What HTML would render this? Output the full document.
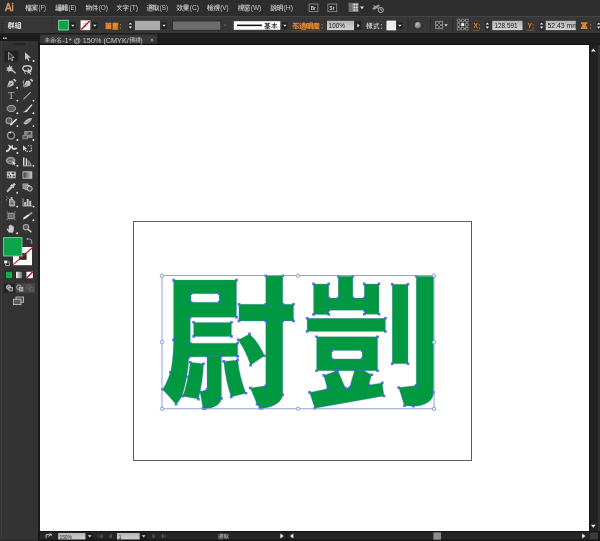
<!DOCTYPE html>
<html>
<head>
<meta charset="utf-8">
<title>Illustrator</title>
<style>
html,body{margin:0;padding:0;background:#333;overflow:hidden;}
body{width:600px;height:541px;position:relative;font-family:"Liberation Sans",sans-serif;}
svg{position:absolute;left:0;top:0;display:block;}
text{font-family:"Liberation Sans",sans-serif;}
</style>
</head>
<body>
<svg width="600" height="541" viewBox="0 0 600 541">
<defs>
<linearGradient id="gfield" x1="0" y1="0" x2="0" y2="1"><stop offset="0" stop-color="#b5b5b5"/><stop offset="1" stop-color="#d2d2d2"/></linearGradient>
<linearGradient id="ggrad" x1="0" y1="0" x2="1" y2="0"><stop offset="0" stop-color="#f4f4f4"/><stop offset="1" stop-color="#6a6a6a"/></linearGradient>
<linearGradient id="ggrad2" x1="0" y1="0" x2="1" y2="0"><stop offset="0" stop-color="#3a3a3a"/><stop offset="1" stop-color="#c8c8c8"/></linearGradient>
<filter id="soft" x="-5%" y="-5%" width="110%" height="110%"><feGaussianBlur stdDeviation="0.32"/></filter>
<filter id="soft2" x="-5%" y="-5%" width="110%" height="110%"><feGaussianBlur stdDeviation="0.4"/></filter>
<radialGradient id="gglobe" cx="0.35" cy="0.35" r="0.7"><stop offset="0" stop-color="#c8c8c8"/><stop offset="1" stop-color="#555"/></radialGradient>
</defs>

<g id="chrome">
<rect x="0" y="0" width="600" height="541" fill="#343333"/>
<rect x="0" y="0" width="600" height="16" fill="#2e2d2d"/>
<rect x="0" y="16" width="600" height="18" fill="#383737"/>
<rect x="0" y="16" width="600" height="1" fill="#454444"/>
<rect x="0" y="33" width="600" height="2" fill="#1f1e1e"/>
<rect x="0" y="35" width="600" height="10" fill="#201f1f"/>
<rect x="0" y="35" width="38" height="506" fill="#343333"/>
<rect x="1" y="41" width="1" height="500" fill="#3d3c3c"/>
<rect x="0" y="35" width="38" height="6" fill="#1d1c1c"/>
<rect x="38" y="35" width="2" height="506" fill="#1c1b1b"/>
<rect x="40" y="34.6" width="117.5" height="10" fill="#393838"/>
<rect x="157.5" y="34.6" width="1" height="10" fill="#161515"/>
<rect x="38" y="43.6" width="562" height="1.4" fill="#121111"/>
</g>

<g id="canvas">
<rect x="40" y="45" width="549" height="486" fill="#ffffff"/>
<rect x="133.5" y="221.5" width="338" height="239" fill="#ffffff" stroke="#5e5e5e" stroke-width="1"/>
</g>

<g id="menubar" filter="url(#soft)">
<text x="5" y="11.2" font-size="11.8" fill="#dca27c" stroke="#d0946c" stroke-width="0.65" textLength="8.7" lengthAdjust="spacingAndGlyphs">Ai</text>
<text x="38.5" y="10.3" font-size="6.6" fill="#c4c4c4" textLength="7.3" lengthAdjust="spacingAndGlyphs">(F)</text>
<text x="68.5" y="10.3" font-size="6.6" fill="#c4c4c4" textLength="7.8" lengthAdjust="spacingAndGlyphs">(E)</text>
<text x="98.7" y="10.3" font-size="6.6" fill="#c4c4c4" textLength="9.3" lengthAdjust="spacingAndGlyphs">(O)</text>
<text x="129.4" y="10.3" font-size="6.6" fill="#c4c4c4" textLength="8.6" lengthAdjust="spacingAndGlyphs">(T)</text>
<text x="159.7" y="10.3" font-size="6.6" fill="#c4c4c4" textLength="8.3" lengthAdjust="spacingAndGlyphs">(S)</text>
<text x="189.7" y="10.3" font-size="6.6" fill="#c4c4c4" textLength="9.3" lengthAdjust="spacingAndGlyphs">(C)</text>
<text x="220.2" y="10.3" font-size="6.6" fill="#c4c4c4" textLength="8.5" lengthAdjust="spacingAndGlyphs">(V)</text>
<text x="250.7" y="10.3" font-size="6.6" fill="#c4c4c4" textLength="10.6" lengthAdjust="spacingAndGlyphs">(W)</text>
<text x="283.5" y="10.3" font-size="6.6" fill="#c4c4c4" textLength="9.5" lengthAdjust="spacingAndGlyphs">(H)</text>
<path d="M25.50,6.17 L27.90,6.17M26.70,4.60 L26.70,10.90M26.70,6.49 L25.50,9.01M26.70,6.49 L27.90,8.38M29.70,4.60 L29.70,5.73M28.68,4.79 L28.98,5.54M30.72,4.79 L30.42,5.54M28.08,6.62 L28.08,5.86 L31.38,5.86 L31.38,6.62M28.80,6.68 L30.60,6.68 L30.60,7.75 L28.80,7.75 L28.80,6.68M28.26,8.38 L31.20,8.38 L31.20,10.90 L28.26,10.90 L28.26,8.38M28.26,9.64 L31.20,9.64M29.70,8.38 L29.70,10.90M34.80,4.60 L34.80,5.23M32.10,6.17 L32.10,5.23 L37.50,5.23 L37.50,6.17M34.50,5.86 L33.30,7.75 L36.30,8.25M36.00,6.17 L33.60,8.38M32.10,6.99 L37.50,6.99M31.98,9.01 L37.62,9.01M34.80,8.38 L34.80,10.90M34.80,9.01 L32.10,10.90M34.80,9.01 L37.50,10.90M57.00,4.60 L55.80,6.17 L57.18,6.05 L55.68,8.06 L57.60,7.75M56.70,8.06 L56.70,10.90M55.80,9.01 L55.62,10.59M57.42,9.01 L57.78,10.27M58.20,4.92 L61.38,4.92M58.38,5.73 L61.08,5.73 L61.08,6.80 L58.38,6.80 L58.38,5.73M58.38,6.80 L58.02,10.90M58.80,7.62 L61.38,7.62 L61.38,10.90 L58.80,10.90 L58.80,7.62M59.70,7.62 L59.70,10.90M60.54,7.62 L60.54,10.90M58.80,9.20 L61.38,9.20M61.80,5.23 L64.50,5.23M62.10,6.17 L64.20,6.17 L64.20,8.57 L62.10,8.57 L62.10,6.17M62.10,7.37 L64.20,7.37M61.80,9.51 L64.56,9.51M63.12,4.60 L63.12,10.90M65.40,4.79 L67.20,4.79 L67.20,5.99 L65.40,5.99 L65.40,4.79M64.80,6.68 L67.80,6.68M65.40,6.68 L65.40,10.27M67.20,6.68 L67.20,10.90M65.40,7.88 L67.20,7.88M65.40,9.01 L67.20,9.01M64.80,10.40 L67.80,10.02M86.60,5.23 L86.00,6.80M86.00,6.49 L88.10,6.49M87.02,4.60 L87.02,10.90M85.70,9.01 L88.10,8.06M89.00,4.60 L88.40,6.80M88.70,6.17 L91.40,6.17 L91.40,10.27 L90.50,10.90M89.60,6.49 L88.10,9.64M90.50,6.49 L89.00,10.59M93.80,4.60 L92.30,7.43M93.20,6.49 L93.20,10.90M95.00,5.23 L94.40,6.80M94.70,6.49 L97.70,6.49M94.10,8.70 L98.00,8.70M96.20,4.60 L96.20,10.90M119.40,4.60 L119.40,5.54M116.70,6.17 L122.10,6.17M120.90,6.17 L119.40,8.70 L116.70,10.90M117.90,6.17 L119.40,8.70 L122.10,10.90M125.70,4.60 L125.70,5.54M123.00,6.80 L123.00,5.86 L128.40,5.86 L128.40,6.80M124.20,7.12 L127.20,7.12 L125.70,8.38M123.00,8.70 L128.40,8.70M125.70,8.38 L125.70,10.90 L124.80,10.59M147.30,5.23 L147.90,6.17M146.88,7.43 L147.90,7.43 L147.90,9.64 L147.00,10.59M147.60,9.95 L148.80,10.90 L152.70,10.90M149.10,4.92 L150.48,4.92 L150.48,6.36 L149.10,6.36 L149.10,4.92M151.02,4.92 L152.40,4.92 L152.40,6.36 L151.02,6.36 L151.02,4.92M148.80,7.43 L152.70,7.43M149.82,6.80 L149.82,8.70M151.68,6.80 L151.68,8.70M148.62,8.70 L152.70,8.70M149.70,9.01 L148.98,9.95M151.68,9.01 L152.46,9.95M153.00,5.23 L156.60,5.23M153.60,5.23 L153.60,9.64M155.70,5.23 L155.70,10.90M153.60,6.68 L155.70,6.68M153.60,8.13 L155.70,8.13M153.00,9.95 L156.60,9.32M156.90,5.86 L158.70,5.86 L156.60,10.90M157.08,7.12 L159.00,10.90M178.20,4.60 L178.20,5.36M176.70,5.86 L179.70,5.86M177.60,6.49 L176.88,7.75M178.80,6.49 L179.58,7.75M179.10,7.75 L176.88,10.90M177.30,8.06 L179.58,10.90M180.90,4.60 L180.00,7.12M180.60,6.17 L182.70,6.17M182.10,6.17 L180.00,10.90M180.60,7.43 L182.70,10.90M183.90,4.92 L188.10,4.92 L188.10,7.75 L183.90,7.75 L183.90,4.92M183.90,6.30 L188.10,6.30M186.00,4.92 L186.00,10.90M183.30,8.70 L188.70,8.70M186.00,8.70 L183.30,10.90M186.00,8.70 L188.70,10.90M207.20,6.17 L209.60,6.17M208.40,4.60 L208.40,10.90M208.40,6.49 L207.20,9.01M208.40,6.49 L209.60,8.38M211.40,4.60 L209.72,6.49M211.40,4.60 L213.20,6.49M210.50,6.62 L212.30,6.62M210.08,7.31 L211.10,7.31 L211.10,8.38 L210.08,8.38 L210.08,7.31M211.70,7.31 L212.72,7.31 L212.72,8.38 L211.70,8.38 L211.70,7.31M210.68,8.70 L209.90,10.90M210.56,9.32 L211.28,10.59M212.30,8.70 L211.58,10.90M212.18,9.32 L213.20,10.90M214.70,4.60 L215.30,5.36M213.68,6.17 L215.90,6.17 L213.68,9.01M214.82,7.43 L214.82,10.90M215.18,7.75 L216.02,8.70M216.80,4.92 L219.20,4.92 L219.20,8.38 L216.80,8.38 L216.80,4.92M216.80,6.05 L219.20,6.05M216.80,7.25 L219.20,7.25M217.40,8.38 L216.38,10.90M218.48,8.38 L218.48,10.59 L219.50,10.59M238.90,4.60 L239.50,5.36M237.88,6.17 L240.10,6.17 L237.88,9.01M239.02,7.43 L239.02,10.90M239.38,7.75 L240.22,8.70M241.00,4.92 L243.40,4.92 L243.40,8.38 L241.00,8.38 L241.00,4.92M241.00,6.05 L243.40,6.05M241.00,7.25 L243.40,7.25M241.60,8.38 L240.58,10.90M242.68,8.38 L242.68,10.59 L243.70,10.59M247.00,4.60 L247.00,5.23M244.30,6.17 L244.30,5.23 L249.70,5.23 L249.70,6.17M246.10,5.54 L245.20,6.68M247.90,5.54 L248.80,6.68M244.90,7.12 L249.10,7.12 L249.10,10.90 L244.90,10.90 L244.90,7.12M247.00,6.49 L246.40,7.43M245.80,8.38 L247.90,8.38 L245.80,9.95M246.40,8.70 L247.90,10.14M271.40,4.60 L272.00,5.23M270.50,5.86 L272.90,5.86M270.92,6.80 L272.48,6.80M270.92,7.75 L272.48,7.75M270.92,8.70 L272.48,8.70 L272.48,10.59 L270.92,10.59 L270.92,8.70M273.80,4.60 L274.40,5.54M275.90,4.60 L275.30,5.54M273.68,6.05 L276.02,6.05 L276.02,8.06 L273.68,8.06 L273.68,6.05M274.40,8.06 L273.20,10.90M275.30,8.06 L275.30,10.59 L276.50,10.59 L276.50,9.64M277.10,5.54 L279.20,5.54 L279.20,9.64 L277.10,9.64 L277.10,5.54M277.10,7.56 L279.20,7.56M280.10,4.92 L282.50,4.92 L282.50,10.90 L281.90,10.59M280.10,4.92 L280.10,8.38 L279.50,10.90M280.10,6.80 L282.50,6.80M280.10,8.70 L282.50,8.70" fill="none" stroke="#cdcdcd" stroke-width="0.8" stroke-opacity="0.95"/>
<rect x="309.1" y="4" width="8.8" height="7.6" fill="#2a2929" stroke="#8b8b8b" stroke-width="0.9"/>
<text x="310.8" y="9.8" font-size="4.6" fill="#d8d8d8" font-weight="bold">Br</text>
<rect x="327.9" y="4" width="8.8" height="7.6" fill="#2a2929" stroke="#8b8b8b" stroke-width="0.9"/>
<text x="329.6" y="9.8" font-size="4.6" fill="#d8d8d8" font-weight="bold">St</text>
<rect x="348.8" y="2.9" width="9.7" height="8.9" fill="#8c8c8c"/><rect x="348.8" y="2.9" width="3.6" height="8.9" fill="#6e6e6e"/>
<path d="M353.6,4.6h1.6M356.2,4.6h1.4M353.6,7.4h1.6M356.2,7.4h1.4M353.6,10.2h1.6M356.2,10.2h1.4" stroke="#e4e4e4" stroke-width="1.2"/>
<path d="M360,6.6h4l-2,2.6z" fill="#e0e0e0"/>
<path d="M372,8.2l6.5,-3.6l1.5,1.5l-6,3.8z" fill="#9b9b9b"/><path d="M373.5,5.5l5,3" stroke="#9b9b9b" stroke-width="1.2"/><circle cx="380.8" cy="10" r="2.6" fill="#2e2d2d" stroke="#b0b0b0" stroke-width="1"/><path d="M380.8,8.4v1.8h1.2" stroke="#e0e0e0" stroke-width="0.7" fill="none"/>
</g>
<g id="controlbar" filter="url(#soft)">
<rect x="51.6" y="18" width="1" height="14" fill="#302f2f"/>
<path d="M1.6,19v13M3.3,19v13" stroke="#262525" stroke-width="0.8" stroke-dasharray="1,1"/>
<path d="M8.41,22.84 L10.89,22.84 L10.89,25.08M8.10,23.99 L11.20,23.99M8.41,25.08 L10.89,25.08M9.65,22.39 L8.29,27.32M8.91,26.04 L10.89,26.04 L10.89,28.28 L8.91,28.28 L8.91,26.04M11.82,22.20 L12.25,23.03M13.87,22.20 L13.43,23.03M11.51,23.61 L14.18,23.61M11.70,25.02 L13.99,25.02M11.32,26.42 L14.30,26.42M12.87,23.16 L12.87,28.60M16.55,22.20 L15.31,23.80 L16.74,23.67 L15.19,25.72 L17.17,25.40M16.24,25.72 L16.24,28.60M15.31,26.68 L15.12,28.28M16.98,26.68 L17.36,27.96M18.10,22.52 L20.58,22.52 L20.58,28.15 L18.10,28.15 L18.10,22.52M18.10,24.38 L20.58,24.38M18.10,26.23 L20.58,26.23M17.48,28.28 L21.20,28.28" fill="none" stroke="#e6e6e6" stroke-width="0.9"/>
<rect x="58.7" y="20.3" width="9.6" height="9.7" fill="#0ca247" stroke="#8fdcae" stroke-width="0.9"/>
<rect x="70.0" y="22.2" width="5.6" height="6.8" rx="0.8" fill="#242323"/><path d="M71.1,24.7h3.4l-1.7,2.1z" fill="#e9e9e9"/>
<rect x="80.8" y="20.4" width="9.3" height="9.6" fill="#ffffff" stroke="#bbb" stroke-width="0.5"/><path d="M81.3,29.5L89.6,21" stroke="#c01c28" stroke-width="1.5"/><rect x="83.8" y="23.6" width="3.2" height="3.2" fill="none" stroke="#d0202a" stroke-width="0.6" stroke-opacity="0.5"/>
<rect x="92.0" y="22.2" width="5.6" height="6.8" rx="0.8" fill="#242323"/><path d="M93.1,24.7h3.4l-1.7,2.1z" fill="#e9e9e9"/>
<rect x="105.3" y="23" width="6.2" height="6" fill="#d97a28" opacity="0.45"/><rect x="112.2" y="23" width="6.2" height="6" fill="#d97a28" opacity="0.45"/>
<path d="M106.54,22.60 L105.61,23.92M106.23,23.26 L107.97,23.26M107.16,23.26 L107.16,24.12M109.33,22.60 L108.52,23.92M109.02,23.26 L111.25,23.26M110.14,23.26 L110.14,24.12M106.23,24.91 L110.57,24.91 L110.57,26.76 L106.23,26.76M105.42,25.90 L111.38,25.90M106.04,27.68 L110.76,27.68M105.61,28.54 L111.19,28.54M108.40,24.25 L108.40,29.20M113.13,23.26 L117.47,23.26 L117.47,24.58 L113.13,24.58M112.32,23.92 L118.28,23.92M112.82,25.37 L117.78,25.37M115.30,22.60 L115.30,26.03M113.44,26.16 L117.16,26.16 L117.16,28.28 L113.44,28.28 L113.44,26.16M113.44,27.22 L117.16,27.22M115.30,26.16 L115.30,28.28M112.39,29.20 L118.21,29.20" fill="none" stroke="#f08c2e" stroke-width="0.95"/>
<rect x="120" y="24.2" width="1" height="1" fill="#ee8a2c"/><rect x="120" y="27.6" width="1" height="1" fill="#ee8a2c"/>
<rect x="127.9" y="21" width="5" height="9.4" fill="#2a2929"/><path d="M128.6,24.6l1.8,-2.2l1.8,2.2z M128.6,26.6l1.8,2.2l1.8,-2.2z" fill="#e2e2e2"/>
<rect x="135" y="20.8" width="25" height="9.3" fill="#a9a9a9"/>
<rect x="161.3" y="22.2" width="5.6" height="6.8" rx="0.8" fill="#242323"/><path d="M162.4,24.7h3.4l-1.7,2.1z" fill="#e9e9e9"/>
<rect x="172.5" y="21" width="48.3" height="9.2" fill="#6c6c6c" stroke="#2a2929" stroke-width="0.8"/>
<path d="M223.5,24.6h3l-1.5,1.9z" fill="#6a6a6a"/>
<rect x="233.8" y="21.2" width="46.5" height="8.6" fill="#fdfdfd"/><rect x="237" y="24.6" width="25" height="1.5" fill="#111"/>
<path d="M264.61,23.53 L270.19,23.53M266.16,22.60 L266.16,26.32M268.64,22.60 L268.64,26.32M266.16,24.46 L268.64,24.46M266.16,25.39 L268.64,25.39M264.30,26.32 L270.50,26.32M265.85,26.51 L264.80,27.56M268.95,26.51 L270.00,27.56M265.85,27.56 L268.95,27.56M267.40,26.63 L267.40,28.80M264.80,28.80 L270.00,28.80M271.51,24.46 L277.09,24.46M274.30,22.60 L274.30,28.80M274.30,24.46 L271.51,27.87M274.30,24.46 L277.09,27.87M273.06,27.25 L275.54,27.25" fill="none" stroke="#222" stroke-width="0.7"/>
<rect x="282.0" y="22.2" width="5.6" height="6.8" rx="0.8" fill="#242323"/><path d="M283.1,24.7h3.4l-1.7,2.1z" fill="#e9e9e9"/>
<rect x="292.7" y="23" width="27" height="6" fill="#d97a28" opacity="0.4"/>
<path d="M293.01,23.26 L298.69,23.26M296.16,23.26 L293.01,26.89M295.85,24.91 L295.85,29.20M296.48,25.57 L298.69,27.55M300.18,23.26 L300.81,24.25M299.74,25.57 L300.81,25.57 L300.81,27.88 L299.87,28.87M300.50,28.21 L301.75,29.20 L305.85,29.20M304.59,22.60 L302.38,23.26M301.94,24.12 L305.85,24.12M303.83,23.06 L303.83,25.77M303.83,24.25 L302.07,25.77M303.83,24.25 L305.72,25.77M302.70,26.23 L305.09,26.23 L304.28,27.09 L305.54,27.09 L305.54,28.21 L304.91,28.21M303.52,26.23 L302.07,28.21M306.71,23.59 L308.92,23.59 L308.92,27.88 L306.71,27.88 L306.71,23.59M306.71,25.70 L308.92,25.70M309.86,22.93 L312.38,22.93 L312.38,29.20 L311.75,28.87M309.86,22.93 L309.86,26.56 L309.23,29.20M309.86,24.91 L312.38,24.91M309.86,26.89 L312.38,26.89M316.40,22.60 L316.40,23.59M314.19,23.59 L319.24,23.59M314.19,23.59 L314.19,26.56 L313.44,29.20M314.82,24.91 L319.24,24.91M315.77,24.25 L315.77,26.23M317.98,24.25 L317.98,26.23M315.77,26.23 L317.98,26.23M315.14,27.22 L318.61,27.22 L314.82,29.20M315.77,27.55 L319.42,29.20" fill="none" stroke="#f08c2e" stroke-width="0.95"/>
<rect x="321.5" y="24.2" width="1" height="1" fill="#ee8a2c"/><rect x="321.5" y="27.6" width="1" height="1" fill="#ee8a2c"/>
<path d="M292.5,30.8h28" stroke="#b06a28" stroke-width="0.6" stroke-dasharray="1,1"/>
<rect x="327" y="20.8" width="27" height="9.3" fill="url(#gfield)"/>
<text x="328.6" y="28.1" font-size="6.7" fill="#1a1a1a" textLength="16.3" lengthAdjust="spacingAndGlyphs">100%</text>
<rect x="355.3" y="21" width="6" height="9" fill="#262525"/><path d="M357.3,23.6v3.8l2.4,-1.9z" fill="#e6e6e6"/>
<path d="M366.40,24.20 L368.80,24.20M367.60,22.60 L367.60,29.00M367.60,24.52 L366.40,27.08M367.60,24.52 L368.80,26.44M369.70,22.60 L370.00,23.24M371.80,22.60 L371.50,23.24M369.16,23.62 L372.28,23.62M369.52,24.52 L371.92,24.52M369.04,25.42 L372.40,25.42M370.72,23.24 L370.72,25.42M370.72,25.80 L370.72,29.00 L370.24,28.74M369.10,26.44 L370.18,26.44 L368.98,28.49M372.16,26.12 L371.32,26.95M371.08,26.95 L372.40,28.74M373.40,24.20 L378.80,24.20M377.00,22.60 L377.30,26.44 L378.80,29.00 L378.98,27.72M377.90,22.92 L378.50,23.56M373.70,26.12 L376.40,26.12M375.02,26.12 L375.02,28.36M373.40,28.68 L376.70,28.04" fill="none" stroke="#d6d6d6" stroke-width="0.75"/>
<rect x="381" y="24.2" width="1" height="1" fill="#d6d6d6"/><rect x="381" y="27.6" width="1" height="1" fill="#d6d6d6"/>
<rect x="386.9" y="21" width="8.8" height="9" fill="#ececec" stroke="#fafafa" stroke-width="0.7"/>
<rect x="397.0" y="22.2" width="5.6" height="6.8" rx="0.8" fill="#242323"/><path d="M398.1,24.7h3.4l-1.7,2.1z" fill="#e9e9e9"/>
<rect x="407.5" y="18" width="1" height="14" fill="#2b2a2a"/>
<circle cx="418" cy="25.3" r="3.9" fill="url(#gglobe)" stroke="#262525" stroke-width="0.8"/><path d="M415.3,25.3a2.7,4.2 0 0 1 5.4,0" fill="none" stroke="#3a3a3a" stroke-width="0.5" opacity="0.6"/>
<rect x="430" y="18" width="1" height="14" fill="#2b2a2a"/>
<rect x="435" y="20.8" width="8.2" height="8.4" fill="#7c7c7c"/><path d="M436.4,22.2h1.8v1.8h-1.8zM440,22.2h1.8v1.8h-1.8zM438.2,24h1.8v1.8h-1.8zM436.4,25.9h1.8v1.8h-1.8zM440,25.9h1.8v1.8h-1.8z" fill="#2c2c2c"/>
<path d="M444.3,24.3h3.4l-1.7,2.1z" fill="#e0e0e0"/>
<rect x="452.3" y="18" width="1" height="14" fill="#2b2a2a"/>
<path d="M458.6,20.5h8.2v8.2h-8.2z" fill="none" stroke="#9a9a9a" stroke-width="0.6"/><path d="M457.3,19.2h2.6v2.6h-2.6zM457.3,23.3h2.6v2.6h-2.6zM457.3,27.4h2.6v2.6h-2.6zM461.4,19.2h2.6v2.6h-2.6zM461.4,23.3h2.6v2.6h-2.6zM461.4,27.4h2.6v2.6h-2.6zM465.5,19.2h2.6v2.6h-2.6zM465.5,23.3h2.6v2.6h-2.6zM465.5,27.4h2.6v2.6h-2.6z" fill="#2c2b2b" stroke="#b4b4b4" stroke-width="0.6"/><rect x="461.4" y="23.3" width="2.6" height="2.6" fill="#fff"/>
<text x="473.4" y="28.3" font-size="6.6" font-weight="bold" fill="#dc842e">X</text><rect x="479" y="24.4" width="1" height="1" fill="#ee8a2c"/><rect x="479" y="27.6" width="1" height="1" fill="#ee8a2c"/><path d="M473,30.3h7" stroke="#b06a28" stroke-width="0.6"/>
<rect x="484.9" y="21" width="5" height="9.4" fill="#2a2929"/><path d="M485.6,24.6l1.8,-2.2l1.8,2.2z M485.6,26.6l1.8,2.2l1.8,-2.2z" fill="#e2e2e2"/>
<rect x="492.3" y="20.8" width="30.2" height="9.3" fill="url(#gfield)"/>
<text x="494.5" y="28.1" font-size="6.9" fill="#1a1a1a" textLength="23" lengthAdjust="spacingAndGlyphs">128.591</text>
<text x="527.4" y="28.3" font-size="6.6" font-weight="bold" fill="#dc842e">Y</text><rect x="532.6" y="24.4" width="1" height="1" fill="#ee8a2c"/><rect x="532.6" y="27.6" width="1" height="1" fill="#ee8a2c"/><path d="M527,30.3h7" stroke="#b06a28" stroke-width="0.6"/>
<rect x="539.1" y="21" width="5" height="9.4" fill="#2a2929"/><path d="M539.8,24.6l1.8,-2.2l1.8,2.2z M539.8,26.6l1.8,2.2l1.8,-2.2z" fill="#e2e2e2"/>
<rect x="545.8" y="20.8" width="30" height="9.3" fill="url(#gfield)"/>
<clipPath id="cy"><rect x="545.8" y="20.8" width="30" height="9.3"/></clipPath>
<text clip-path="url(#cy)" x="547.5" y="28.1" font-size="6.9" fill="#1a1a1a" textLength="30.5" lengthAdjust="spacingAndGlyphs">52.43 mm</text>
<path d="M581,22.3h6.4v1.6h-1.5l0.8,3.2h0.7v1.8h-6.4v-1.8h0.7l0.8,-3.2h-1.5z" fill="#dc842e"/><rect x="590" y="24.4" width="1" height="1" fill="#ee8a2c"/><rect x="590" y="27.6" width="1" height="1" fill="#ee8a2c"/>
<rect x="596.2" y="21" width="5" height="9.4" fill="#2a2929"/><path d="M596.9,24.6l1.8,-2.2l1.8,2.2z M596.9,26.6l1.8,2.2l1.8,-2.2z" fill="#e2e2e2"/>
</g>
<g id="tabbar" filter="url(#soft)">
<path d="M45.40,38.67 L49.11,38.67M44.87,40.05 L49.64,40.05M47.25,37.30 L47.25,42.80M47.25,40.05 L44.87,42.52M47.25,40.05 L49.64,42.52M53.00,37.30 L50.62,39.50M53.00,37.30 L55.39,39.50M51.94,39.50 L54.06,39.50M50.88,40.32 L52.73,40.32 L52.73,42.25 L50.88,42.25 L50.88,40.32M53.53,40.32 L55.39,40.32 L55.39,42.25 L54.86,42.25M53.53,40.32 L53.53,42.80M58.48,37.30 L56.63,39.50M58.22,38.12 L60.61,38.12 L57.16,41.70M57.95,39.22 L59.02,40.05M57.95,40.60 L60.87,40.60 L60.87,42.80 L57.95,42.80 L57.95,40.60" fill="none" stroke="#c2c2c2" stroke-width="0.65" stroke-opacity="0.9"/>
<text x="62.2" y="42.9" font-size="6.3" fill="#c2c2c2" textLength="66.6" lengthAdjust="spacingAndGlyphs">-1* @ 150% (CMYK/</text>
<path d="M129.56,37.57 L131.42,37.57 L130.52,38.51M129.83,38.67 L131.10,39.22M129.30,39.61 L131.69,39.61 L131.21,40.32M130.52,39.61 L130.52,42.80 L129.94,42.52M131.95,37.57 L134.60,37.57M133.28,37.57 L133.01,38.29M132.27,38.40 L134.34,38.40 L134.34,41.31 L132.27,41.31 L132.27,38.40M132.27,39.39 L134.34,39.39M132.27,40.32 L134.34,40.32M132.80,41.48 L131.95,42.80M133.75,41.48 L134.60,42.80M136.11,37.30 L136.64,37.96M135.21,38.67 L137.17,38.67 L135.21,41.15M136.22,39.77 L136.22,42.80M136.53,40.05 L137.28,40.88M137.97,37.57 L140.09,37.57 L140.09,40.60 L137.97,40.60 L137.97,37.57M137.97,38.56 L140.09,38.56M137.97,39.61 L140.09,39.61M138.50,40.60 L137.59,42.80M139.45,40.60 L139.45,42.52 L140.35,42.52" fill="none" stroke="#c2c2c2" stroke-width="0.65" stroke-opacity="0.9"/>
<text x="140.6" y="42.9" font-size="6.3" fill="#c2c2c2">)</text>
<path d="M150.7,38.8l2.4,2.4M153.1,38.8l-2.4,2.4" stroke="#c8c8c8" stroke-width="0.7"/>
<rect x="3.2" y="37.4" width="1.3" height="1.6" fill="#d8d8d8"/><rect x="5.3" y="37.4" width="1.3" height="1.6" fill="#d8d8d8"/>
<rect x="13.5" y="43.5" width="11.5" height="1.2" fill="#1d1c1c"/>
</g>
<g id="toolbar" filter="url(#soft)">
<rect x="4.3" y="50.6" width="13.8" height="11.1" fill="#232222"/>
<path d="M8.6,52.3l0,7.6l1.9,-1.7l1.3,2.6l1.2,-0.6l-1.3,-2.5l2.5,-0.2z" fill="#353434" stroke="#a8a8a8" stroke-width="0.9" stroke-linejoin="round"/>
<path d="M25,52.2l0,7.8l1.9,-1.8l1.4,2.8l1.3,-0.6l-1.4,-2.7l2.6,-0.2z" fill="#c6c6c6"/>
<circle cx="33.6" cy="60.9" r="0.95" fill="#ededed"/>
<path d="M9.4,64.8l0.9,2l2.1,-0.8l-0.9,2l2,1l-2.1,0.7l0.6,2.1l-2,-1l-1.3,1.8l-0.5,-2.2l-2.2,0.1l1.6,-1.5l-1.3,-1.8l2.2,0.2z" fill="#c6c6c6"/><path d="M10.8,69.2l4.9,4" stroke="#c6c6c6" stroke-width="1.4"/>
<ellipse cx="27.2" cy="68.4" rx="4.3" ry="2.7" fill="none" stroke="#c6c6c6" stroke-width="1.45"/><path d="M25.2,70.5q-1.5,2 0.3,3.4" fill="none" stroke="#c6c6c6" stroke-width="0.9"/><path d="M27.6,68l0,6l1.5,-1.3l1,2l1,-0.5l-1,-1.9l1.9,-0.2z" fill="#c6c6c6"/>
<path d="M12.1,80.6L13.9,82.4L13.5,85.3Q11,86.7 7.1,87.5Q7.9,83.5 9.3,81Z" fill="#c6c6c6"/><path d="M13,79.7l1.3,-1.2l2.2,2.2l-1.2,1.3z" fill="#c6c6c6"/><path d="M7.4,87.2l3.4,-3.4" stroke="#343333" stroke-width="0.7"/><circle cx="11.2" cy="83.4" r="0.7" fill="#343333"/>
<circle cx="17.2" cy="87.8" r="0.95" fill="#ededed"/>
<path d="M28.9,80.6L30.7,82.4L30.3,85.3Q27.8,86.7 23.9,87.5Q24.7,83.5 26.1,81Z" fill="#c6c6c6"/><path d="M29.8,79.7l1.3,-1.2l2.2,2.2l-1.2,1.3z" fill="#c6c6c6"/><path d="M24.2,87.2l3.4,-3.4" stroke="#343333" stroke-width="0.7"/><path d="M24.6,80q-2.6,1.4 -1,3.2q1.3,1.5 -0.6,3.4" fill="none" stroke="#c6c6c6" stroke-width="0.9"/>
<text x="7.9" y="99" font-size="10.6" fill="#b4b4b4" style="font-family:'Liberation Serif',serif">T</text>
<circle cx="17.4" cy="100.6" r="0.95" fill="#ededed"/>
<path d="M23.4,99.3L30.7,92.2" stroke="#a8a8a8" stroke-width="1.1"/>
<circle cx="33.5" cy="100.6" r="0.95" fill="#ededed"/>
<ellipse cx="11.3" cy="108.5" rx="4.2" ry="3" fill="#5e5e5e" stroke="#b4b4b4" stroke-width="1"/>
<circle cx="17.4" cy="113.3" r="0.95" fill="#ededed"/>
<path d="M31.4,104.2l1.1,0.9l-4.6,5.4l-1.2,-1z" fill="#d2d2d2"/><path d="M26.5,109.4l1.5,1.3q-1.2,2 -5.4,1.5q2.6,-0.7 3.9,-2.8z" fill="#e4e4e4"/>
<circle cx="33.4" cy="113.3" r="0.95" fill="#ededed"/>
<circle cx="9" cy="120.8" r="3" fill="#5c5c5c" stroke="#9d9d9d" stroke-width="1.1"/><path d="M10.3,125.3L16.7,119" stroke="#ececec" stroke-width="1.6"/>
<circle cx="17.4" cy="126.1" r="0.95" fill="#ededed"/>
<path d="M23.3,123.6q0.2,-1.4 2.6,-3.4q3,-2.4 5.4,-2.1q1,0.4 0.4,1.6q-1,2 -3.6,3.8q-3.2,1.8 -4.8,0.1z" fill="#a2a2a2"/><path d="M26.4,120.6q2.4,-1.8 4.4,-1.6" stroke="#d8d8d8" stroke-width="0.8" fill="none"/><path d="M24.2,123.4q1.4,0.6 3,-0.4" stroke="#d0d0d0" stroke-width="0.9" fill="none"/>
<circle cx="33.4" cy="126.1" r="0.95" fill="#ededed"/>
<circle cx="11" cy="135.4" r="3.5" fill="none" stroke="#8e8e8e" stroke-width="1.5"/><circle cx="11.2" cy="135.4" r="1.3" fill="#222121"/><path d="M8.2,132.6l2.4,-1.2l0.2,2.4z" fill="#e2e2e2"/>
<circle cx="17.4" cy="140.0" r="0.95" fill="#ededed"/>
<rect x="24.8" y="131.5" width="7.2" height="5.8" fill="#7e7e7e" stroke="#b0b0b0" stroke-width="0.7"/><path d="M26.4,135.6l3.6,-2.6m-1.8,-0.2l2,0l0,1.8" stroke="#2a2a2a" stroke-width="0.8" fill="none"/><rect x="22.9" y="135.2" width="4.6" height="3.6" fill="#5a5a5a" stroke="#a4a4a4" stroke-width="0.7"/>
<circle cx="33.4" cy="140.0" r="0.95" fill="#ededed"/>
<path d="M6.7,151.2q2.2,-0.4 3.2,-3q1,-3.2 2.2,-0.6q1,2.2 4,0.8" fill="none" stroke="#d6d6d6" stroke-width="1.9" stroke-linecap="round"/><path d="M8.6,144.8l1.6,2M12.8,145.2l-0.8,1.6" stroke="#d6d6d6" stroke-width="1.1"/>
<circle cx="17.4" cy="153.0" r="0.95" fill="#ededed"/>
<path d="M23,145.2l0,5.6l1.4,-1.2l0.9,1.9l0.9,-0.4l-0.9,-1.9l1.9,-0.2z" fill="#d4d4d4"/><path d="M27.8,145.8h1.4M30.2,145.8h1.6M31.4,147.6v1.2M31.4,149.8v1.4M26.6,151.4h1.4M29,151.4h1.4" stroke="#c6c6c6" stroke-width="1.1"/>
<path d="M6.2,160.6q0.2,-2.8 3.6,-3.4q3.6,-0.4 5,2q0.6,2 -1,3.6q-2.4,1.8 -5.2,0.8q-2.2,-1 -2.4,-3z" fill="#8a8a8a" stroke="#bcbcbc" stroke-width="0.7"/><path d="M8,160.4q1.6,-1.8 4,-0.6M9,162.4q1.4,0.6 2.6,-0.2" stroke="#4a4a4a" stroke-width="0.9" fill="none"/><path d="M12.4,160.2l0,5.2l1.3,-1.1l0.9,1.8l0.9,-0.4l-0.9,-1.8l1.7,-0.2z" fill="#e6e6e6" stroke="#2a2929" stroke-width="0.3"/>
<circle cx="17.4" cy="165.8" r="0.95" fill="#ededed"/>
<path d="M23,157.4h1.4v8h-1.4zM25.7,158.4h1.5v7h-1.5z" fill="#dadada"/><path d="M28.3,160.6h1.1v4.8h-1.1zM30.2,162.8h0.9v2.6h-0.9z" fill="#a8a8a8"/><path d="M23,165.4h8.6v0.9h-8.6z" fill="#c8c8c8"/><path d="M24.4,157.6l7.2,7.4" stroke="#8a8a8a" stroke-width="0.7"/>
<circle cx="33.4" cy="165.8" r="0.95" fill="#ededed"/>
<rect x="6.8" y="171.5" width="9" height="6.8" fill="#b2b2b2"/><path d="M8.4,173h1.6v1.2h-1.6zM12,172.6h2v1.4h-2zM10,175h1.6v1.4h-1.6zM13.2,175.6h1.6v1.4h-1.6zM7.6,176.2h1.4v1.2h-1.4z" fill="#3c3c3c"/><path d="M6.8,174.6q2.2,-1.2 4.4,0t4.6,0.2M11,171.5q-1,1.8 0.2,3.4t0,3.4" stroke="#e8e8e8" stroke-width="0.6" fill="none"/>
<rect x="23" y="171.8" width="8.8" height="6.4" fill="url(#ggrad2)" stroke="#c6c6c6" stroke-width="0.9"/>
<path d="M15.4,184.4l-1.2,-1.1l-2,1.7l-0.6,-0.5l-1,1l0.6,0.6l-4,4.4l-0.3,1.4l1.4,-0.4l4.2,-4.2l0.6,0.6l1,-1l-0.6,-0.6z" fill="#c6c6c6" stroke="#c6c6c6" stroke-width="0.7" stroke-linejoin="round"/>
<circle cx="17.2" cy="192.7" r="0.95" fill="#ededed"/>
<rect x="23" y="184" width="5" height="4.4" fill="#6a6a6a" stroke="#c6c6c6" stroke-width="0.8"/><rect x="25" y="185.6" width="4.4" height="4" fill="#808080" stroke="#c6c6c6" stroke-width="0.7"/><circle cx="29.7" cy="188.6" r="2.5" fill="#4a4a4a" stroke="#dcdcdc" stroke-width="0.9"/>
<path d="M9.6,199.4h3.4l1.6,2v4.6h-5z" fill="#8c8c8c" stroke="#c6c6c6" stroke-width="0.8"/><path d="M10.6,197.2h2v2h-2z" fill="#c6c6c6"/><path d="M6.4,196.8h1M7.4,198.4h1M6,199.8h1" stroke="#c6c6c6" stroke-width="0.8"/><circle cx="12" cy="203.2" r="1.3" fill="#3a3a3a" stroke="#c6c6c6" stroke-width="0.5"/>
<circle cx="17.2" cy="206.6" r="0.95" fill="#ededed"/>
<path d="M23,198.4v7.6h9.4" stroke="#c6c6c6" stroke-width="0.8" fill="none"/><path d="M24.2,202h1.9v4h-1.9zM26.7,199h1.9v7h-1.9zM29.3,200.8h1.9v5.2h-1.9z" fill="#c6c6c6"/>
<circle cx="33.6" cy="206.6" r="0.95" fill="#ededed"/>
<rect x="8.2" y="213.6" width="6" height="4.8" fill="#6c6c6c" stroke="#a2a2a2" stroke-width="0.8"/><path d="M6,212.4h10.4M6,219.6h10.4M7.4,210.8v10.4M15,210.8v10.4" stroke="#8a8a8a" stroke-width="0.7" stroke-dasharray="1.6,1" opacity="0.85"/>
<path d="M23,219.4l0.6,-1.8l4.6,-3.4l1.4,1.2l-4.4,3.4z" fill="#ececec"/><path d="M28,214.4l3.2,-2.4l1.2,0.6l-0.2,1.2l-3,2z" fill="#9c9c9c"/>
<circle cx="33.4" cy="220.3" r="0.95" fill="#ededed"/>
<path d="M8.8,232.6l-2.2,-3.6q0.3,-1 1.4,-0.2l0.8,1v-4q0.6,-0.9 1.2,0v-0.8q0.7,-0.9 1.3,0v0.6q0.7,-0.8 1.3,0v0.9q0.7,-0.7 1.2,0.2v3.6l-0.9,2.4z" fill="#cdcdcd"/>
<circle cx="17.2" cy="233.3" r="0.95" fill="#ededed"/>
<circle cx="26" cy="227.2" r="2.7" fill="#585858" stroke="#a6a6a6" stroke-width="1.1"/><path d="M28,229.3l3.4,3" stroke="#d8d8d8" stroke-width="1.5"/>
<rect x="13" y="247" width="19" height="18.2" fill="#ffffff"/><rect x="19" y="253" width="7.6" height="6.8" fill="#2a2929"/><path d="M13.2,264.6L32.8,247.2" stroke="#c21a28" stroke-width="1.25"/>
<rect x="3.6" y="237.6" width="18.4" height="18.4" fill="#0ca449" stroke="#74d69c" stroke-width="0.9"/>
<path d="M27.4,239l2.4,0q1.8,0.2 1.8,2.2l0,1.6" fill="none" stroke="#b8b8b8" stroke-width="0.8"/><path d="M27.6,237.8v2.4l-1.4,-1.2zM30.4,242.4h2.4l-1.2,1.4z" fill="#b8b8b8"/>
<rect x="5.8" y="262" width="3.4" height="3.4" fill="#1a1a1a" stroke="#e6e6e6" stroke-width="0.7"/><rect x="4" y="260.2" width="3.4" height="3.4" fill="#f2f2f2" stroke="#222" stroke-width="0.4"/>
<rect x="5" y="270.8" width="8.1" height="8.4" rx="1" fill="#232222"/><rect x="15.1" y="270.8" width="8.1" height="8.4" rx="1" fill="#232222"/><rect x="25.5" y="270.8" width="8.3" height="8.4" rx="1" fill="#232222"/>
<rect x="5.9" y="271.7" width="6.3" height="6.6" fill="#12aa4c"/>
<rect x="16" y="271.7" width="6.3" height="6.6" fill="url(#ggrad)"/>
<rect x="26.4" y="271.7" width="6.5" height="6.6" fill="#fff"/><path d="M26.6,278L32.7,272" stroke="#c01826" stroke-width="1.6"/>
<rect x="3.6" y="283.4" width="11.4" height="9.4" fill="#242323"/>
<circle cx="8.6" cy="287.2" r="2.3" fill="#8a8a8a" stroke="#d0d0d0" stroke-width="0.7"/><rect x="9" y="287.6" width="3.6" height="3.4" fill="#5a5a5a" stroke="#d0d0d0" stroke-width="0.7"/>
<rect x="15.8" y="283.4" width="19" height="9.4" fill="#4a4949"/>
<circle cx="18.9" cy="287.2" r="2.3" fill="#5a5a5a" stroke="#c0c0c0" stroke-width="0.7"/><rect x="19.3" y="287.6" width="3.6" height="3.4" fill="#8a8a8a" stroke="#c0c0c0" stroke-width="0.7"/>
<circle cx="29" cy="287.2" r="2.3" fill="none" stroke="#6a6a6a" stroke-width="0.7"/><rect x="29.4" y="287.6" width="3.6" height="3.4" fill="none" stroke="#6a6a6a" stroke-width="0.7"/>
<rect x="16" y="297" width="7.6" height="5.2" fill="#4a4a4a" stroke="#cdcdcd" stroke-width="0.8"/><rect x="13.4" y="299.2" width="7.6" height="5.4" fill="#5a5a5a" stroke="#cdcdcd" stroke-width="0.8"/>
</g>
<g id="bottom" filter="url(#soft)">
<rect x="589" y="44" width="11" height="497" fill="#1a1919"/>
<rect x="590" y="45" width="7.6" height="487" fill="#222121"/>
<rect x="597.6" y="45" width="2.4" height="496" fill="#333232"/>
<path d="M590.9,51.6l2.4,-3l2.4,3z" fill="#ececec"/>
<path d="M590.9,524.8l2.4,3l2.4,-3z" fill="#ececec"/>
<rect x="38" y="531" width="562" height="10" fill="#161515"/>
<rect x="40" y="532.2" width="549" height="7.4" fill="#272626"/>
<rect x="0" y="539.6" width="38" height="1.4" fill="#2a2929"/>
<path d="M46.2,538.2v-3.6h3M48.4,536.6l2.8,-2.6m-2.2,0h2.2v2" stroke="#d8d8d8" stroke-width="0.9" fill="none"/>
<rect x="58.2" y="533" width="27.2" height="6.4" fill="url(#gfield)"/>
<text x="59.4" y="538.5" font-size="5.6" fill="#1a1a1a" textLength="12.6" lengthAdjust="spacingAndGlyphs">150%</text>
<rect x="86.6" y="533" width="6.2" height="6.4" fill="#1b1a1a"/><path d="M87.9,535.2h3.6l-1.8,2.2z" fill="#e6e6e6"/>
<path d="M98.6,534.4v3.6M102.2,534.4l-2.2,1.8l2.2,1.8zM111.4,534.4l-2.2,1.8l2.2,1.8z" stroke="#5c5b5b" stroke-width="0.6" fill="#5c5b5b"/>
<rect x="117" y="533" width="22.6" height="6.4" fill="url(#gfield)"/>
<text x="118.4" y="538.5" font-size="5.6" fill="#1a1a1a">1</text>
<rect x="140.6" y="533" width="6.2" height="6.4" fill="#1b1a1a"/><path d="M141.9,535.2h3.6l-1.8,2.2z" fill="#e6e6e6"/>
<path d="M152.8,534.4l2.2,1.8l-2.2,1.8zM162,534.4l2.2,1.8l-2.2,1.8zM165.4,534.4v3.6" stroke="#5c5b5b" stroke-width="0.6" fill="#5c5b5b"/>
<path d="M218.50,534.30 L219.00,535.05M218.15,536.05 L219.00,536.05 L219.00,537.80 L218.25,538.55M218.75,538.05 L219.75,538.80 L223.00,538.80M220.00,534.05 L221.15,534.05 L221.15,535.20 L220.00,535.20 L220.00,534.05M221.60,534.05 L222.75,534.05 L222.75,535.20 L221.60,535.20 L221.60,534.05M219.75,536.05 L223.00,536.05M220.60,535.55 L220.60,537.05M222.15,535.55 L222.15,537.05M219.60,537.05 L223.00,537.05M220.50,537.30 L219.90,538.05M222.15,537.30 L222.80,538.05M223.60,534.30 L226.60,534.30M224.10,534.30 L224.10,537.80M225.85,534.30 L225.85,538.80M224.10,535.45 L225.85,535.45M224.10,536.60 L225.85,536.60M223.60,538.05 L226.60,537.55M226.85,534.80 L228.35,534.80 L226.60,538.80M227.00,535.80 L228.60,538.80" fill="none" stroke="#bdbdbd" stroke-width="0.6"/>
<path d="M280.4,533.4l3.2,2.6l-3.2,2.6z" fill="#f0f0f0"/>
<rect x="286" y="532.4" width="0.9" height="7" fill="#0e0d0d"/>
<path d="M293.4,533.4l-3.4,2.6l3.4,2.6z" fill="#f0f0f0"/>
<rect x="433.4" y="532.4" width="7.6" height="7.3" fill="#8d8d8d"/>
<path d="M582.2,533.4l3.2,2.6l-3.2,2.6z" fill="#f0f0f0"/>
<rect x="589.6" y="532.4" width="8.4" height="7" fill="#3c3b3b"/>
</g>
<g id="glyphs" filter="url(#soft2)" fill="#06983f" stroke="#5f7fe0" stroke-opacity="0.55" stroke-width="0.6">
<!-- 尉 : 尸 + left stroke + 2nd horizontal -->
<path fill-rule="evenodd" d="M173.6,280.1 L236.5,280.1 L236.5,317.3 L190.3,317.3 L190.3,343.2 L237.7,343.2 L237.7,356.5 L189,357 C188.5,365 187.6,372 186.6,377 C185.5,384 184,390 182.2,395.5 C180.5,399 178.5,402 176,404.3 L162.7,389.5 C166,384 168.5,378 170.4,372.5 C172.5,364 173.3,352 173.6,340 Z M191,293.7 H219.1 V302.2 H191 Z"/>
<rect x="193.7" y="322.5" width="37.7" height="14"/>
<path d="M190.3,362.2 L203.6,363.7 C203,377 201,389 198.4,399.1 L182.9,396.2 C186.5,386 189,374 190.3,362.2 Z"/>
<path d="M207,356 L221.4,356 L221.4,398.4 C221,404 215,407.8 205.1,408.8 L203,408.5 L200,391.8 L207,389.5 Z"/>
<path d="M223.7,361.4 L237.7,360 C239,372 242,383 245.9,393.2 L231.1,396.9 C227.5,386 225,374 223.7,361.4 Z"/>
<path d="M238.2,340 L249.6,334 C256,340 261,347.5 264.4,355.8 L250.6,365.3 C247.5,356 243.5,347.5 238.2,340 Z"/>
<!-- 寸 -->
<path d="M265.8,275.8 H282.8 V304.3 H293.6 V321 H282.8 V394.7 C282.5,401 275,407 262,408.5 L260,408.3 L257,404.3 L250.3,388 L265.8,385.8 V321 H238.9 V304.3 H265.8 Z"/>
<!-- 剴 -->
<path d="M313.6,284 H328.8 V298.1 H338.2 V276.2 H352.9 V298.1 H364.3 V284 H379 V314.2 H364.3 V310.2 H328.8 V314.4 H313.6 Z"/>
<rect x="307.1" y="318.3" width="78.3" height="13.1"/>
<path fill-rule="evenodd" d="M316.6,336.8 H377.6 V370.8 H316.6 Z M331.8,350.6 H362.1 V358.9 H331.8 Z"/>
<path d="M323.7,375.5 L335.5,371.2 L337.7,370 L345.3,388 L349.3,388 L354.7,370 L363.6,370.5 L371.7,374.8 L368.8,385.1 L382.2,382.9 L384,395.9 L314.8,408.3 L309.6,392.5 L327.4,388.8 Z"/>
<rect x="392.2" y="284.3" width="15.8" height="79.4"/>
<path d="M416.2,276.2 H433.5 V392.5 C433.5,401 425,406.2 413.2,406.2 L404.4,405.8 L398.7,387.6 L416.2,385.5 Z"/>
</g>
<!-- ===== selection overlay ===== -->
<g id="selection" filter="url(#soft)">
<path d="M172.2,278.8h2.7v2.7h-2.7zM235.2,278.8h2.7v2.7h-2.7zM235.2,315.9h2.7v2.7h-2.7zM188.9,315.9h2.7v2.7h-2.7zM188.9,341.9h2.7v2.7h-2.7zM236.3,341.9h2.7v2.7h-2.7zM236.3,355.1h2.7v2.7h-2.7zM187.7,355.6h2.7v2.7h-2.7zM185.2,375.6h2.7v2.7h-2.7zM180.8,394.1h2.7v2.7h-2.7zM174.7,402.9h2.7v2.7h-2.7zM161.3,388.1h2.7v2.7h-2.7zM169.1,371.1h2.7v2.7h-2.7zM172.2,338.6h2.7v2.7h-2.7zM189.7,292.4h2.7v2.7h-2.7zM217.8,292.4h2.7v2.7h-2.7zM217.8,300.9h2.7v2.7h-2.7zM189.7,300.9h2.7v2.7h-2.7zM188.9,360.9h2.7v2.7h-2.7zM202.2,362.4h2.7v2.7h-2.7zM197.1,397.8h2.7v2.7h-2.7zM181.6,394.9h2.7v2.7h-2.7zM205.7,354.6h2.7v2.7h-2.7zM220.1,354.6h2.7v2.7h-2.7zM220.1,397.1h2.7v2.7h-2.7zM203.8,407.4h2.7v2.7h-2.7zM201.7,407.1h2.7v2.7h-2.7zM198.7,390.4h2.7v2.7h-2.7zM205.7,388.1h2.7v2.7h-2.7zM222.3,360.1h2.7v2.7h-2.7zM236.3,358.6h2.7v2.7h-2.7zM244.6,391.9h2.7v2.7h-2.7zM229.8,395.6h2.7v2.7h-2.7zM236.8,338.6h2.7v2.7h-2.7zM248.2,332.6h2.7v2.7h-2.7zM263.1,354.4h2.7v2.7h-2.7zM249.2,363.9h2.7v2.7h-2.7zM264.4,274.4h2.7v2.7h-2.7zM281.4,274.4h2.7v2.7h-2.7zM281.4,302.9h2.7v2.7h-2.7zM292.2,302.9h2.7v2.7h-2.7zM292.2,319.6h2.7v2.7h-2.7zM281.4,319.6h2.7v2.7h-2.7zM281.4,393.4h2.7v2.7h-2.7zM260.6,407.1h2.7v2.7h-2.7zM258.6,406.9h2.7v2.7h-2.7zM255.7,402.9h2.7v2.7h-2.7zM248.9,386.6h2.7v2.7h-2.7zM264.4,384.4h2.7v2.7h-2.7zM264.4,319.6h2.7v2.7h-2.7zM237.6,319.6h2.7v2.7h-2.7zM237.6,302.9h2.7v2.7h-2.7zM264.4,302.9h2.7v2.7h-2.7zM312.2,282.6h2.7v2.7h-2.7zM327.4,282.6h2.7v2.7h-2.7zM327.4,296.8h2.7v2.7h-2.7zM336.9,296.8h2.7v2.7h-2.7zM336.9,274.9h2.7v2.7h-2.7zM351.6,274.9h2.7v2.7h-2.7zM351.6,296.8h2.7v2.7h-2.7zM362.9,296.8h2.7v2.7h-2.7zM362.9,282.6h2.7v2.7h-2.7zM377.6,282.6h2.7v2.7h-2.7zM377.6,312.9h2.7v2.7h-2.7zM362.9,312.9h2.7v2.7h-2.7zM362.9,308.9h2.7v2.7h-2.7zM327.4,308.9h2.7v2.7h-2.7zM327.4,313.1h2.7v2.7h-2.7zM312.2,313.1h2.7v2.7h-2.7zM315.2,335.4h2.7v2.7h-2.7zM376.2,335.4h2.7v2.7h-2.7zM376.2,369.4h2.7v2.7h-2.7zM315.2,369.4h2.7v2.7h-2.7zM330.4,349.2h2.7v2.7h-2.7zM360.8,349.2h2.7v2.7h-2.7zM360.8,357.6h2.7v2.7h-2.7zM330.4,357.6h2.7v2.7h-2.7zM322.4,374.1h2.7v2.7h-2.7zM334.1,369.9h2.7v2.7h-2.7zM336.4,368.6h2.7v2.7h-2.7zM343.9,386.6h2.7v2.7h-2.7zM347.9,386.6h2.7v2.7h-2.7zM353.4,368.6h2.7v2.7h-2.7zM362.2,369.1h2.7v2.7h-2.7zM370.4,373.4h2.7v2.7h-2.7zM367.4,383.8h2.7v2.7h-2.7zM380.9,381.6h2.7v2.7h-2.7zM382.6,394.6h2.7v2.7h-2.7zM313.4,406.9h2.7v2.7h-2.7zM308.2,391.1h2.7v2.7h-2.7zM326.1,387.4h2.7v2.7h-2.7zM414.9,274.9h2.7v2.7h-2.7zM432.1,274.9h2.7v2.7h-2.7zM432.1,391.1h2.7v2.7h-2.7zM411.9,404.9h2.7v2.7h-2.7zM403.1,404.4h2.7v2.7h-2.7zM397.4,386.2h2.7v2.7h-2.7zM414.9,384.1h2.7v2.7h-2.7zM192.3,321.1h2.7v2.7h-2.7zM230.1,321.1h2.7v2.7h-2.7zM230.1,335.1h2.7v2.7h-2.7zM192.3,335.1h2.7v2.7h-2.7zM305.8,316.9h2.7v2.7h-2.7zM384.1,316.9h2.7v2.7h-2.7zM384.1,330.1h2.7v2.7h-2.7zM305.8,330.1h2.7v2.7h-2.7zM390.9,282.9h2.7v2.7h-2.7zM406.6,282.9h2.7v2.7h-2.7zM406.6,362.4h2.7v2.7h-2.7zM390.9,362.4h2.7v2.7h-2.7z" fill="#3c60e2" fill-opacity="0.85"/>
<rect x="162" y="275.6" width="272" height="133.2" fill="none" stroke="#8594dc" stroke-width="0.9"/>
<g fill="#ffffff" stroke="#7085de" stroke-width="0.8">
<circle cx="162" cy="275.6" r="1.7"/><circle cx="298" cy="275.6" r="1.7"/><circle cx="434" cy="275.6" r="1.7"/>
<circle cx="162" cy="342.2" r="1.7"/><circle cx="434" cy="342.2" r="1.7"/>
<circle cx="162" cy="408.8" r="1.7"/><circle cx="298" cy="408.8" r="1.7"/><circle cx="434" cy="408.8" r="1.7"/>
</g>
</g>
</svg>
</body>
</html>
